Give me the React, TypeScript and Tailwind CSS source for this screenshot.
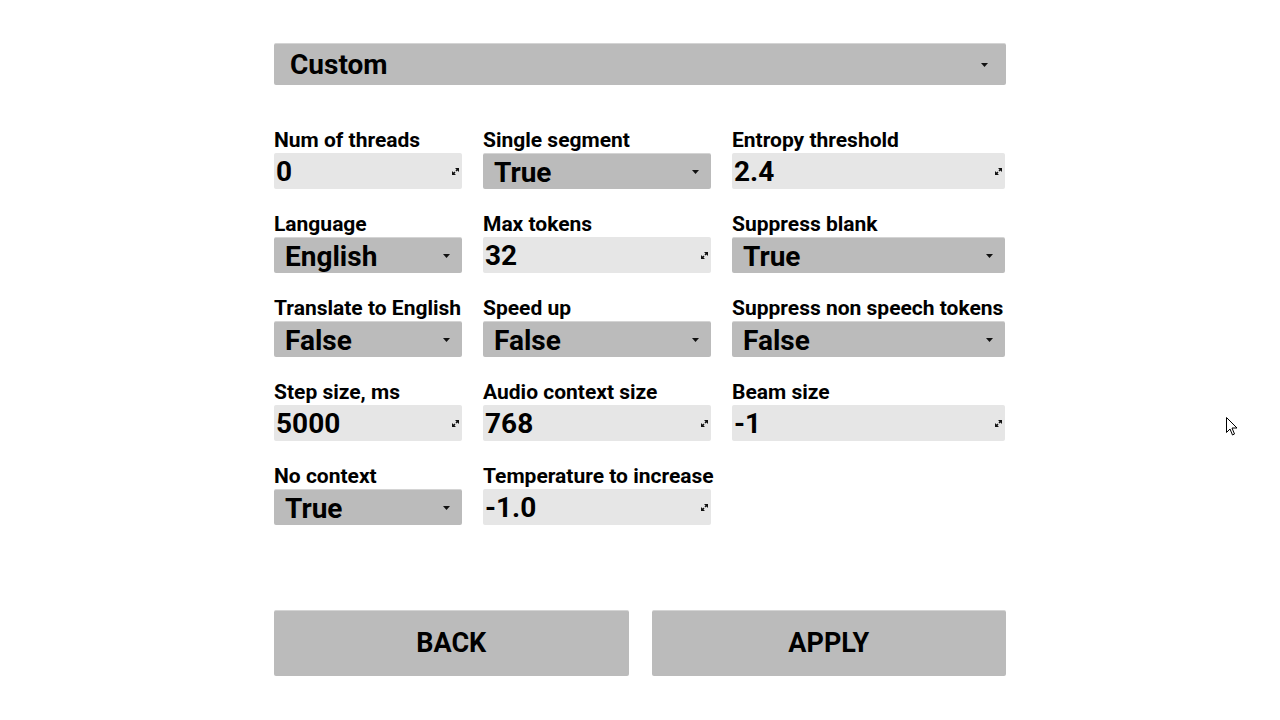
const font = { fontFamily: "Roboto, 'Liberation Sans', sans-serif" };

type Field = { label: string; value: string; kind: "select" | "spin" };

const rows: (Field | null)[][] = [
  [
    { label: "Num of threads", value: "0", kind: "spin" },
    { label: "Single segment", value: "True", kind: "select" },
    { label: "Entropy threshold", value: "2.4", kind: "spin" },
  ],
  [
    { label: "Language", value: "English", kind: "select" },
    { label: "Max tokens", value: "32", kind: "spin" },
    { label: "Suppress blank", value: "True", kind: "select" },
  ],
  [
    { label: "Translate to English", value: "False", kind: "select" },
    { label: "Speed up", value: "False", kind: "select" },
    { label: "Suppress non speech tokens", value: "False", kind: "select" },
  ],
  [
    { label: "Step size, ms", value: "5000", kind: "spin" },
    { label: "Audio context size", value: "768", kind: "spin" },
    { label: "Beam size", value: "-1", kind: "spin" },
  ],
  [
    { label: "No context", value: "True", kind: "select" },
    { label: "Temperature to increase", value: "-1.0", kind: "spin" },
    null,
  ],
];

const DropArrow = () => (
  <svg width="7" height="4" viewBox="0 0 7 4" className="shrink-0">
    <path d="M0 0H7L3.5 4Z" fill="#111" />
  </svg>
);

const SpinIcon = () => (
  <svg width="7" height="7" viewBox="0 0 7 7" className="shrink-0">
    <path d="M0 7V3L1.5 4.5L2.5 3.5L3.5 4.5L2.5 5.5L4 7Z" fill="#111" />
    <path d="M7 0V4L5.5 2.5L4.5 3.5L3.5 2.5L4.5 1.5L3 0Z" fill="#111" />
  </svg>
);

const FieldBox = ({ f }: { f: Field }) => {
  if (f.kind === "select") {
    return (
      <div className="flex items-center justify-between h-[36px] pl-[11px] pr-[12px] rounded-[2px] bg-[#bbbbbb] border-t border-[#d4d4d4]">
        <span className="pt-[2px] text-[28px] font-bold leading-none text-black">{f.value}</span>
        <DropArrow />
      </div>
    );
  }
  return (
    <div className="flex items-center justify-between h-[36px] pl-[2px] pr-[3px] rounded-[2px] bg-[#e6e6e6]">
      <span className="pt-[2px] text-[28px] font-bold leading-none text-black">{f.value}</span>
      <SpinIcon />
    </div>
  );
};

export default function App() {
  return (
    <div className="relative w-[1280px] h-[720px] bg-white overflow-hidden" style={font}>
      <div className="w-[732px] mx-auto pt-[43px] flex flex-col">
        <div className="flex items-center justify-between h-[42px] pl-[16px] pr-[18px] rounded-[2px] bg-[#bbbbbb] border-t border-[#d4d4d4]">
          <span className="pt-[1px] text-[28px] font-bold leading-none text-black">Custom</span>
          <DropArrow />
        </div>

        <div className="mt-[42px] grid grid-cols-[188px_228px_273px] gap-x-[21px] gap-y-[22px]">
          {rows.flat().map((f, i) =>
            f ? (
              <div key={i} className="flex flex-col">
                <span className="pt-[1px] text-[21px] font-bold leading-[25px] text-black whitespace-nowrap">
                  {f.label}
                </span>
                <FieldBox f={f} />
              </div>
            ) : (
              <div key={i} />
            )
          )}
        </div>

        <div className="mt-[85px] flex gap-[23px]">
          <button className="flex-1 h-[66px] rounded-[2px] bg-[#bbbbbb] border-t border-[#d4d4d4] text-[27px] font-bold text-black">
            BACK
          </button>
          <button className="flex-1 h-[66px] rounded-[2px] bg-[#bbbbbb] border-t border-[#d4d4d4] text-[27px] font-bold text-black">
            APPLY
          </button>
        </div>
      </div>

      {/* mouse pointer */}
      <svg className="absolute left-[1226px] top-[417px]" width="12" height="19" viewBox="0 0 12 19">
        <path d="M0.5 0.5V15.5L4 12L6.5 18L8.5 17L6 11H11Z" fill="white" stroke="black" strokeWidth="1" />
      </svg>
    </div>
  );
}
